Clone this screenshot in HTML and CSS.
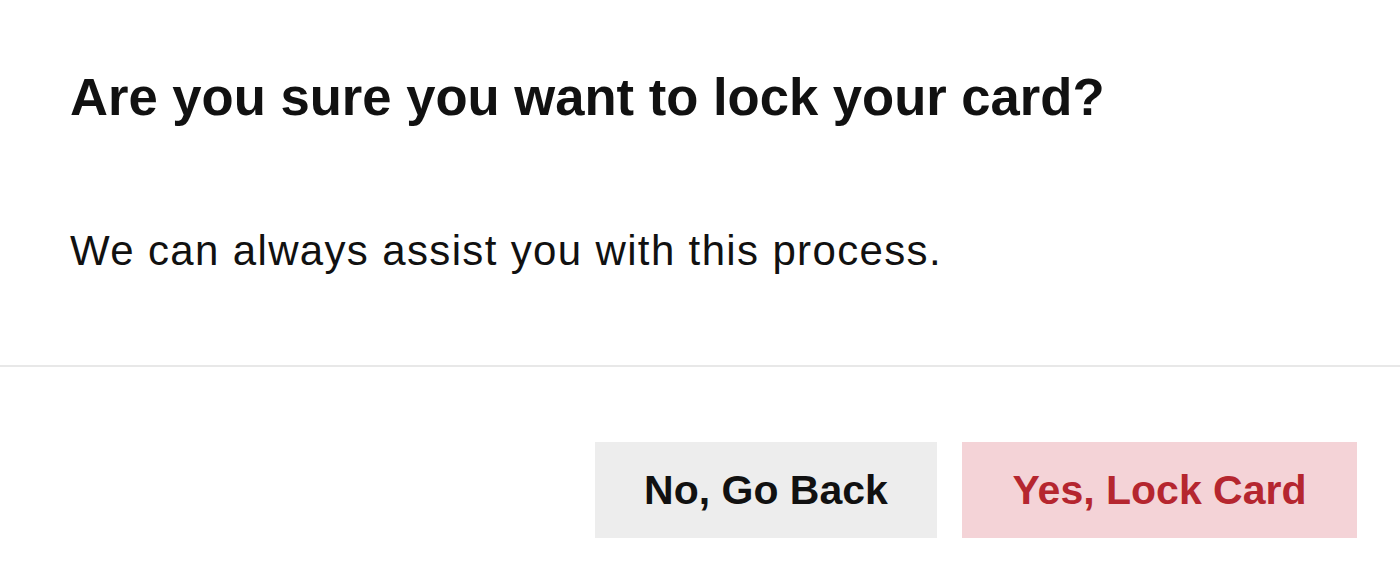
FILE: index.html
```html
<!DOCTYPE html>
<html lang="en">
<head>
    <meta charset="UTF-8">
    <meta name="viewport" content="width=device-width, initial-scale=1.0">
    <title>Lock card</title>
    <link rel="stylesheet" href="styles.css">
</head>
<body>
    <div class="dialog">
        <div class="dialog-body">
            <h1 class="dialog-title">Are you sure you want to lock your card?</h1>
            <p class="dialog-text">We can always assist you with this process.</p>
        </div>
        <div class="dialog-footer">
            <button type="button" class="btn btn-back">No, Go Back</button>
            <button type="button" class="btn btn-lock">Yes, Lock Card</button>
        </div>
    </div>
</body>
</html>
```

FILE: styles.css
```css
body {
    margin: 0;
    background: #fff;
    font-family: "Liberation Sans", Arial, sans-serif;
    color: #111;
}
.dialog {
    width: 1400px;
    height: 573px;
}
.dialog-body {
    box-sizing: border-box;
    height: 367px;
    padding: 67px 70px 0;
    border-bottom: 2px solid #e8e8e8;
}
.dialog-title {
    margin: 0;
    font-size: 52.6px;
    line-height: 60px;
    font-weight: bold;
}
.dialog-text {
    margin: 99px 0 0;
    font-size: 42px;
    line-height: 50px;
    letter-spacing: 1.35px;
}
.dialog-footer {
    display: flex;
    justify-content: flex-end;
    gap: 25px;
    padding: 75px 43px 0;
}
.btn {
    height: 96px;
    border: none;
    border-radius: 0;
    font-family: "Liberation Sans", Arial, sans-serif;
    font-size: 41px;
    font-weight: bold;
    cursor: pointer;
}
.btn-back {
    width: 342px;
    background: #ededed;
    color: #111;
}
.btn-lock {
    width: 395px;
    background: #f4d3d7;
    color: #b5262f;
}
```
